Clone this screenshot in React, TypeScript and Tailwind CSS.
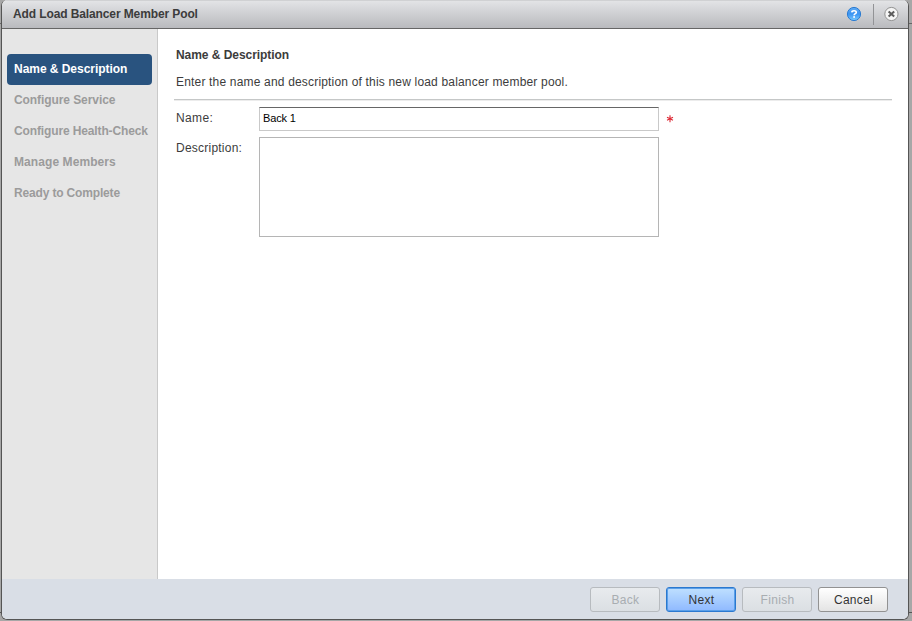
import clsx from 'clsx';

const steps = [
  { label: 'Name & Description', spacing: 'tracking-[-0.04px]' },
  { label: 'Configure Service', spacing: 'tracking-[-0.08px]' },
  { label: 'Configure Health-Check', spacing: 'tracking-[-0.13px]' },
  { label: 'Manage Members', spacing: 'tracking-[0.08px]' },
  { label: 'Ready to Complete', spacing: 'tracking-[-0.16px]' },
];

function HelpIcon() {
  return (
    <svg width="16" height="16" viewBox="0 0 16 16">
      <defs>
        <linearGradient id="help" x1="0" y1="0" x2="0" y2="1">
          <stop offset="0" stopColor="#62adf5" />
          <stop offset="0.5" stopColor="#3a93f2" />
          <stop offset="1" stopColor="#7accff" />
        </linearGradient>
      </defs>
      <circle cx="8" cy="8" r="6.6" fill="url(#help)" stroke="#2c7bd0" />
      <path
        d="M5.8 6.4C5.9 4.2 10.3 4.2 10.3 6.4C10.3 7.7 8.2 7.6 8.1 9.2"
        fill="none"
        stroke="#fff"
        strokeWidth="1.6"
      />
      <rect x="7.2" y="10.2" width="1.8" height="1.6" fill="#fff" />
    </svg>
  );
}

function CloseIcon() {
  return (
    <svg width="16" height="16" viewBox="0 0 16 16">
      <circle cx="8.4" cy="8" r="6.6" fill="#f5f5f5" stroke="#929292" />
      <path d="M5.6 5.4L11.2 10.6M11.2 5.4L5.6 10.6" stroke="#5c5c5c" strokeWidth="2" />
    </svg>
  );
}

function Button({ label, kind = 'normal' }: { label: string; kind?: 'normal' | 'primary' | 'disabled' }) {
  return (
    <button
      disabled={kind === 'disabled'}
      className={clsx(
        'h-[25px] w-[70px] rounded-[3px] border pl-px text-[12px] leading-[22px] tracking-[0.3px]',
        kind === 'normal' && 'border-[#929292] bg-linear-to-b from-white to-[#e4e4e4] text-[#333]',
        kind === 'primary' &&
          'border-[#2b78cf] bg-linear-to-b from-[#bfe0ff] to-[#8fb9ff] text-[#333] shadow-[inset_0_0_0_1px_#5a9fe8]',
        kind === 'disabled' && 'border-[#b7bbbf] bg-linear-to-b from-[#e8ebee] to-[#dbdfe3] text-[#a8adb1]',
      )}
    >
      {label}
    </button>
  );
}

export default function App() {
  return (
    <div className="relative h-[621px] w-[912px] overflow-hidden bg-[#a7a7a7] pl-px font-['Liberation_Sans',Arial,sans-serif] text-[12px] text-[#3c3c3c]">
      <div className="absolute top-[23px] left-0 h-px w-full bg-[#666]" />
      <div className="absolute top-[612px] left-0 h-px w-full bg-[#555]" />
      <div className="relative flex h-[620px] w-[908px] flex-col overflow-hidden rounded-[6px] border border-t-0 border-[#555] bg-white">
        <header className="flex h-[29px] shrink-0 items-center border-b border-[#666] bg-linear-to-b from-[#e4e5e7] to-[#b9babe] pl-[11px] shadow-[inset_0_1px_0_#d0d1d3]">
          <h1 className="flex-1 text-[12px] leading-4 font-bold tracking-[-0.11px]">Add Load Balancer Member Pool</h1>
          <HelpIcon />
          <div className="mr-[9px] ml-[11px] h-[21px] w-px bg-[#929396]" />
          <div className="mr-[9px] pb-px">
            <CloseIcon />
          </div>
        </header>

        <div className="flex min-h-0 flex-1">
          <nav className="w-[156px] border-r border-[#c9c9c9] bg-[#e6e6e6] pt-[25px] pl-[5px]">
            {steps.map((step, i) => (
              <div
                key={step.label}
                className={clsx(
                  'h-[31px] w-[145px] rounded-[4px] pl-[7px] leading-[30px] font-bold whitespace-nowrap',
                  step.spacing,
                  i === 0 ? 'bg-[#29537f] text-white' : 'text-[#9b9b9b]',
                )}
              >
                {step.label}
              </div>
            ))}
          </nav>

          <main className="flex-1 pt-[18px] pr-4 pl-4">
            <h2 className="pl-0.5 text-[12px] leading-4 font-bold tracking-[-0.05px]">Name &amp; Description</h2>
            <p className="mt-[11px] pl-0.5 leading-4 tracking-[0.18px]">
              Enter the name and description of this new load balancer member pool.
            </p>
            <div className="mt-[9px] h-0.5 border-t border-[#c5c7c7] bg-[#ececec]" />
            <div className="mt-1.5 flex">
              <label htmlFor="name" className="w-[85px] pt-[3px] pl-0.5 leading-4 tracking-[0.35px]">
                Name:
              </label>
              <input
                id="name"
                defaultValue="Back 1"
                className="h-6 w-[400px] border border-[#c9c9c9] border-t-[#666] px-[3px] pb-[2px] text-[11px] tracking-[-0.15px] text-black outline-none"
              />
              <svg className="mt-[7px] ml-[7px]" width="8" height="9" viewBox="0 0 8 9">
                <path d="M4 1.2V8.2M1 3.2L7 6.2M7 3.2L1 6.2" stroke="#dd2733" strokeWidth="1.1" />
              </svg>
            </div>
            <div className="mt-1.5 flex">
              <label htmlFor="description" className="w-[85px] pt-[3px] pl-0.5 leading-4 tracking-[0.23px]">
                Description:
              </label>
              <textarea
                id="description"
                className="h-[100px] w-[400px] resize-none border border-[#b5b5b5] outline-none"
              />
            </div>
          </main>
        </div>

        <footer className="flex h-10 shrink-0 justify-end gap-1.5 bg-[#d9dee6] pt-2 pr-5">
          <Button label="Back" kind="disabled" />
          <Button label="Next" kind="primary" />
          <Button label="Finish" kind="disabled" />
          <Button label="Cancel" />
        </footer>
      </div>
    </div>
  );
}
